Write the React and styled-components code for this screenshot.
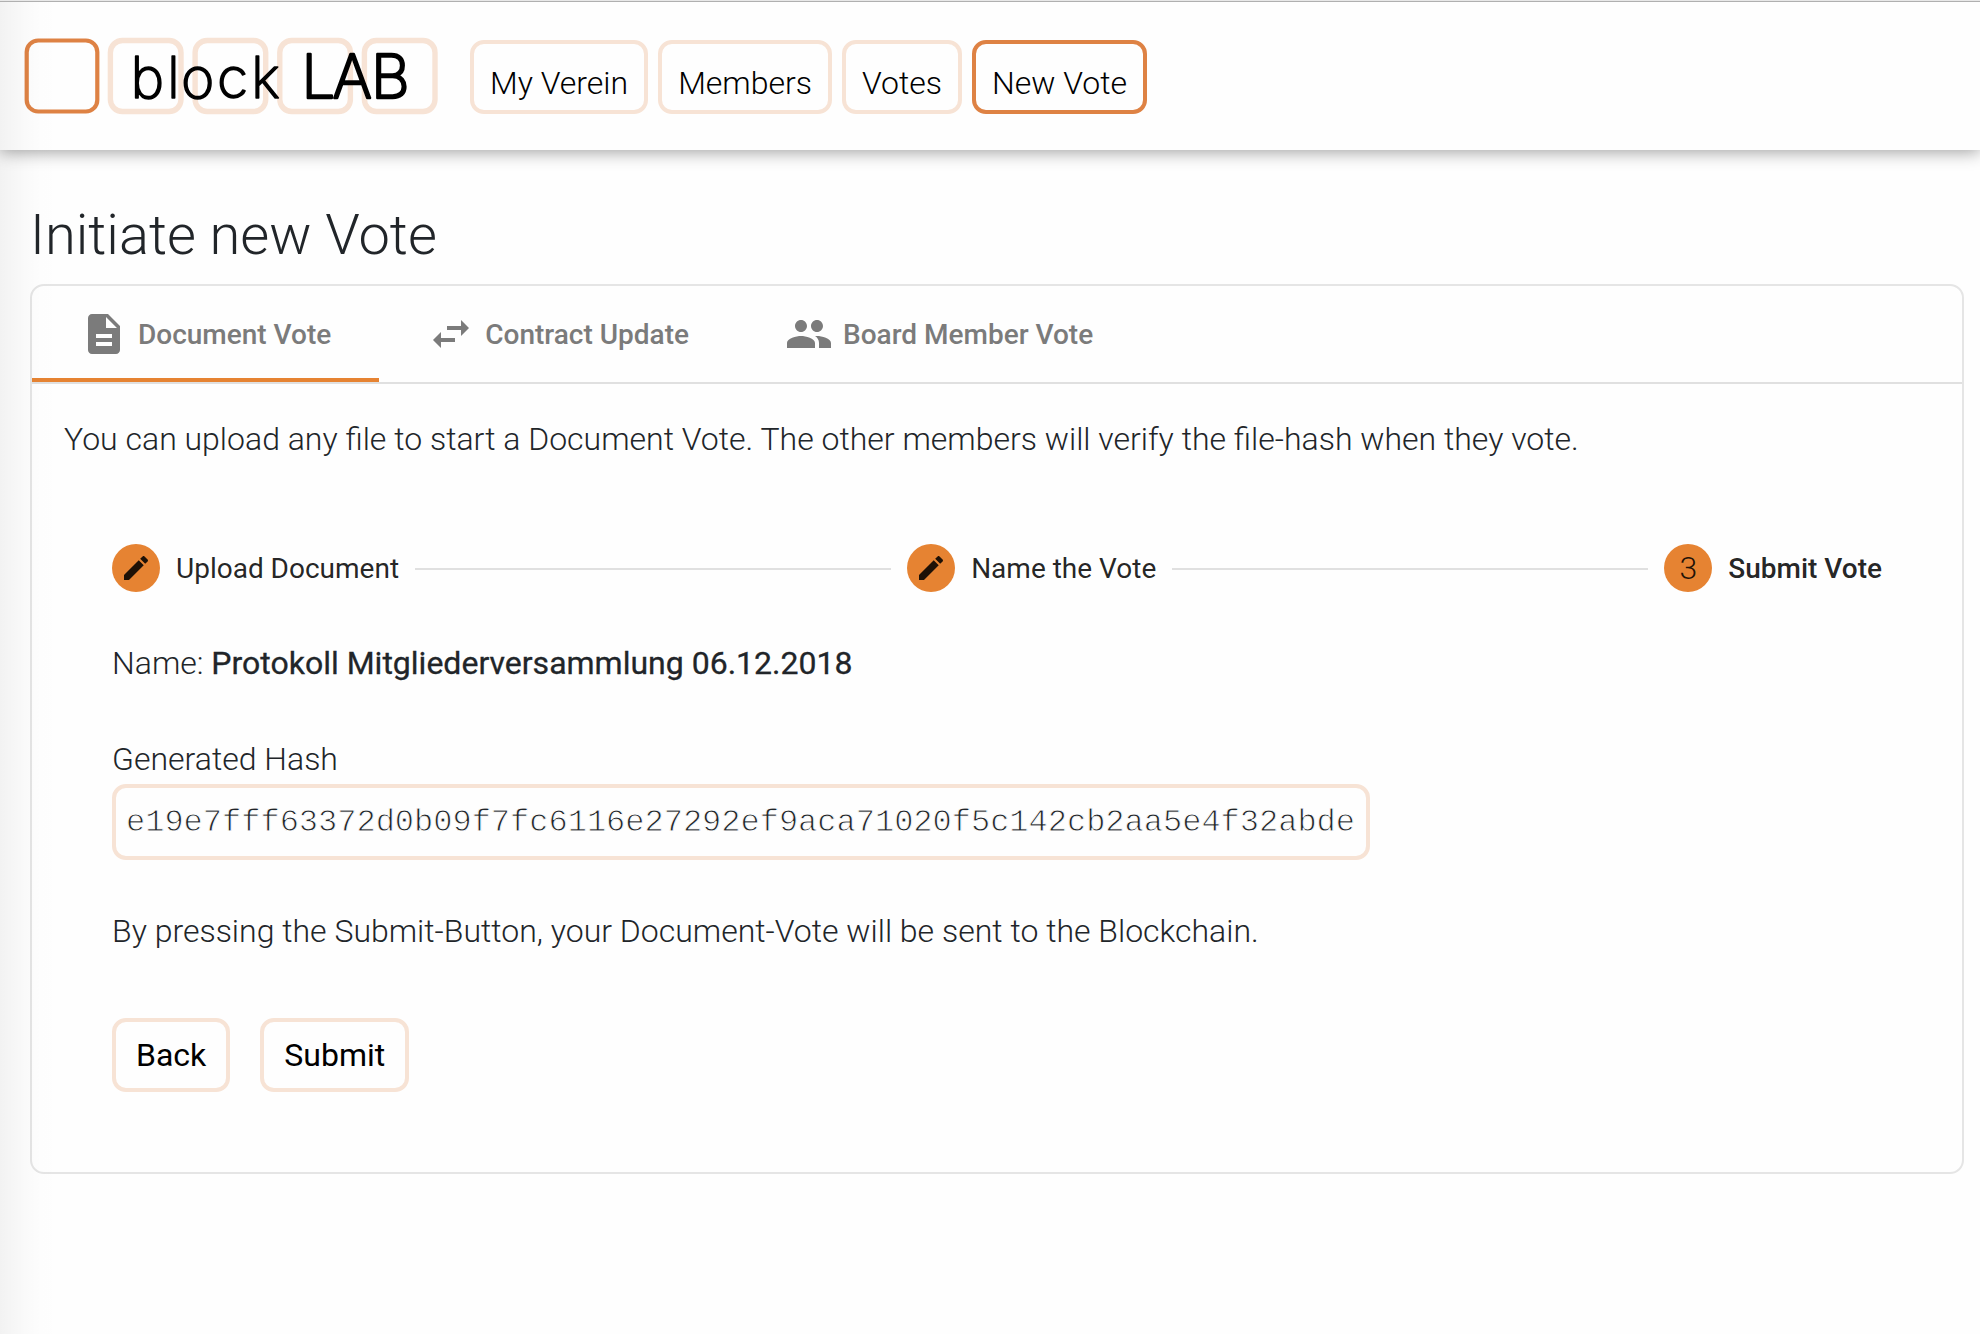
import React from "react";
import styled, { createGlobalStyle } from "styled-components";

const Global = createGlobalStyle`
  *, *::before, *::after { box-sizing: border-box; }
  html, body, #root { height: 100%; }
  body {
    margin: 0;
    background: #fefefe;
    color: #212529;
    font-family: Roboto, "Liberation Sans", sans-serif;
    font-size: 32px;
    font-weight: 300;
    line-height: 48px;
    overflow: hidden;
  }
`;

const Page = styled.div`
  position: relative;
  height: 1334px;
  display: flex;
  flex-direction: column;
`;

const EdgeShade = styled.div`
  position: absolute;
  inset: 2px auto 0 0;
  width: 62px;
  pointer-events: none;
  background: linear-gradient(
    to right,
    rgba(0, 0, 0, 0.048) 0,
    rgba(0, 0, 0, 0.034) 10px,
    rgba(0, 0, 0, 0.016) 26px,
    rgba(0, 0, 0, 0.005) 42px,
    rgba(0, 0, 0, 0) 62px
  );
`;

const Header = styled.header`
  flex: none;
  height: 150px;
  padding: 37px 24px 0;
  display: flex;
  align-items: flex-start;
  background: linear-gradient(#e8e8e8 1px, #b0b0b0 1px, #b0b0b0 2px, #fefefe 2px);
  box-shadow: 0 2px 16px rgba(0, 0, 0, 0.38);
`;

const Logo = styled.svg`
  display: block;
  flex: none;
  width: 416px;
  height: 80px;
  margin-right: 30px;
  font-family: Inter, "Liberation Sans", sans-serif;
`;

const Nav = styled.nav`
  display: flex;
  gap: 10px;
  padding-top: 3px;
`;

const NavLink = styled.a`
  height: 74px;
  padding: 15px 16px 0;
  border: 4px solid ${(p) => (p.$active ? "#de8244" : "#f7e3d5")};
  border-radius: 14px;
  color: #000;
  white-space: nowrap;
`;

const Main = styled.main`
  flex: 1;
  padding: 51px 16px 0 30px;
`;

const Title = styled.h1`
  margin: 0 0 15px;
  font-size: 56px;
  font-weight: 300;
  line-height: 68px;
`;

const Card = styled.section`
  height: 890px;
  border: 2px solid #e5e5e5;
  border-radius: 14px;
`;

const Tabs = styled.div`
  display: flex;
  height: 98px;
  border-bottom: 2px solid #e0e0e0;
`;

const Tab = styled.div`
  display: flex;
  align-items: center;
  gap: 10px;
  padding: 4px 48px 0;
  border-bottom: 4px solid ${(p) => (p.$active ? "#e68332" : "transparent")};
  color: #7b7b7b;
  font-size: 28px;
  font-weight: 500;
  white-space: nowrap;
`;

const Label = styled.span`
  padding-top: 2px;
`;

const Icon = styled.svg`
  display: block;
  flex: none;
  width: ${(p) => p.$size}px;
  height: ${(p) => p.$size}px;
  fill: currentColor;
`;

const Body = styled.div`
  padding: 31px 32px 0;
`;

const Text = styled.p`
  margin: 0;
`;

const Stepper = styled.div`
  padding: 81px 48px 0;
`;

const Steps = styled.div`
  display: flex;
  align-items: center;
  gap: 16px;
  height: 48px;
  margin-bottom: 47px;
`;

const Step = styled.div`
  display: flex;
  align-items: center;
  gap: 16px;
  color: rgba(0, 0, 0, 0.87);
  font-size: 28px;
  font-weight: ${(p) => (p.$current ? 500 : 400)};
  white-space: nowrap;
`;

const Badge = styled.span`
  display: flex;
  align-items: center;
  justify-content: center;
  width: 48px;
  height: 48px;
  border-radius: 50%;
  background: #e68332;
  font-size: 32px;
  font-weight: 300;
`;

const Line = styled.span`
  flex: 1;
  height: 2px;
  margin-top: 2px;
  background: #e0e0e0;
`;

const Strong = styled.strong`
  font-weight: 400;
  -webkit-text-stroke: 0.3px currentColor;
`;

const Field = styled.div`
  display: flex;
  flex-direction: column;
  align-items: flex-start;
  margin: 48px 0 47px;
`;

const Hash = styled.code`
  height: 76px;
  margin-top: 1px;
  padding: 11px 11px 0 10px;
  border: 4px solid #f7e3d5;
  border-radius: 14px;
  color: #212529;
  font-family: "Liberation Mono", monospace;
  font-size: 32px;
  white-space: nowrap;
  -webkit-text-stroke: 0.9px #fefefe;
`;

const Actions = styled.div`
  display: flex;
  gap: 30px;
  margin-top: 63px;
`;

const Button = styled.button`
  height: 74px;
  padding: 0 20px;
  border: 4px solid #f7e3d5;
  border-radius: 14px;
  background: transparent;
  color: #000;
  font: 400 32px/48px Roboto, sans-serif;
`;

const icons = {
  doc: "M14 2H6c-1.1 0-1.99.9-1.99 2L4 20c0 1.1.89 2 1.99 2H18c1.1 0 2-.9 2-2V8l-6-6zm2 16H8v-2h8v2zm0-4H8v-2h8v2zm-3-5V3.5L18.5 9H13z",
  swap: "M6.99 11L3 15l3.99 4v-3H14v-2H6.99v-3zM21 9l-3.99-4v3H10v2h7.01v3L21 9z",
  people:
    "M16 11c1.66 0 2.99-1.34 2.99-3S17.66 5 16 5c-1.66 0-3 1.34-3 3s1.34 3 3 3zm-8 0c1.66 0 2.99-1.34 2.99-3S9.66 5 8 5C6.34 5 5 6.34 5 8s1.34 3 3 3zm0 2c-2.33 0-7 1.17-7 3.5V19h14v-2.5c0-2.33-4.67-3.5-7-3.5zm8 0c-.29 0-.62.02-.97.05 1.16.84 1.97 1.97 1.97 3.45V19h6v-2.5c0-2.33-4.67-3.5-7-3.5z",
  edit: "M3 17.25V21h3.75L17.81 9.94l-3.75-3.75L3 17.25zM20.71 7.04c.39-.39.39-1.02 0-1.41l-2.34-2.34c-.39-.39-1.02-.39-1.41 0l-1.83 1.83 3.75 3.75 1.83-1.83z",
};

const Glyph = ({ name, size }) => (
  <Icon viewBox="0 0 24 24" $size={size}>
    <path d={icons[name]} />
  </Icon>
);

const tabs = [
  ["doc", "Document Vote"],
  ["swap", "Contract Update"],
  ["people", "Board Member Vote"],
];

export default function App() {
  return (
    <Page>
      <Global />
      <Header>
        <Logo viewBox="24 37 416 80">
          <g fill="none">
            <rect x="26.7" y="40.5" width="70.6" height="71" rx="11.5" stroke="#de8244" strokeWidth="4.2" />
            {[110.4, 195.1, 279.8, 364.4].map((x) => (
              <rect key={x} x={x} y="40.5" width="70.6" height="71" rx="12" stroke="#f7e3d5" strokeWidth="5.4" />
            ))}
          </g>
          <g stroke="#000" strokeLinejoin="round">
            <text x="130.5 167 181 217 251" y="97.5" fontSize="57" fontWeight="200" strokeWidth="1.6">block</text>
            <text x="301.5 332.5 371" y="97.5" fontSize="60" fontWeight="200" strokeWidth="2.4">LAB</text>
          </g>
        </Logo>
        <Nav>
          <NavLink>My Verein</NavLink>
          <NavLink>Members</NavLink>
          <NavLink>Votes</NavLink>
          <NavLink $active>New Vote</NavLink>
        </Nav>
      </Header>
      <Main>
        <Title>Initiate new Vote</Title>
        <Card>
          <Tabs>
            {tabs.map(([icon, label], i) => (
              <Tab key={label} $active={i === 0}>
                <Glyph name={icon} size={48} />
                <Label>{label}</Label>
              </Tab>
            ))}
          </Tabs>
          <Body>
            <Text>
              You can upload any file to start a Document Vote. The other members will verify the
              file-hash when they vote.
            </Text>
            <Stepper>
              <Steps>
                <Step>
                  <Badge><Glyph name="edit" size={32} /></Badge>
                  <Label>Upload Document</Label>
                </Step>
                <Line />
                <Step>
                  <Badge><Glyph name="edit" size={32} /></Badge>
                  <Label>Name the Vote</Label>
                </Step>
                <Line />
                <Step $current>
                  <Badge>3</Badge>
                  <Label>Submit Vote</Label>
                </Step>
              </Steps>
              <Text>
                Name: <Strong>Protokoll Mitgliederversammlung 06.12.2018</Strong>
              </Text>
              <Field>
                <Text>Generated Hash</Text>
                <Hash>e19e7fff63372d0b09f7fc6116e27292ef9aca71020f5c142cb2aa5e4f32abde</Hash>
              </Field>
              <Text>By pressing the Submit-Button, your Document-Vote will be sent to the Blockchain.</Text>
              <Actions>
                <Button>Back</Button>
                <Button>Submit</Button>
              </Actions>
            </Stepper>
          </Body>
        </Card>
      </Main>
      <EdgeShade />
    </Page>
  );
}
